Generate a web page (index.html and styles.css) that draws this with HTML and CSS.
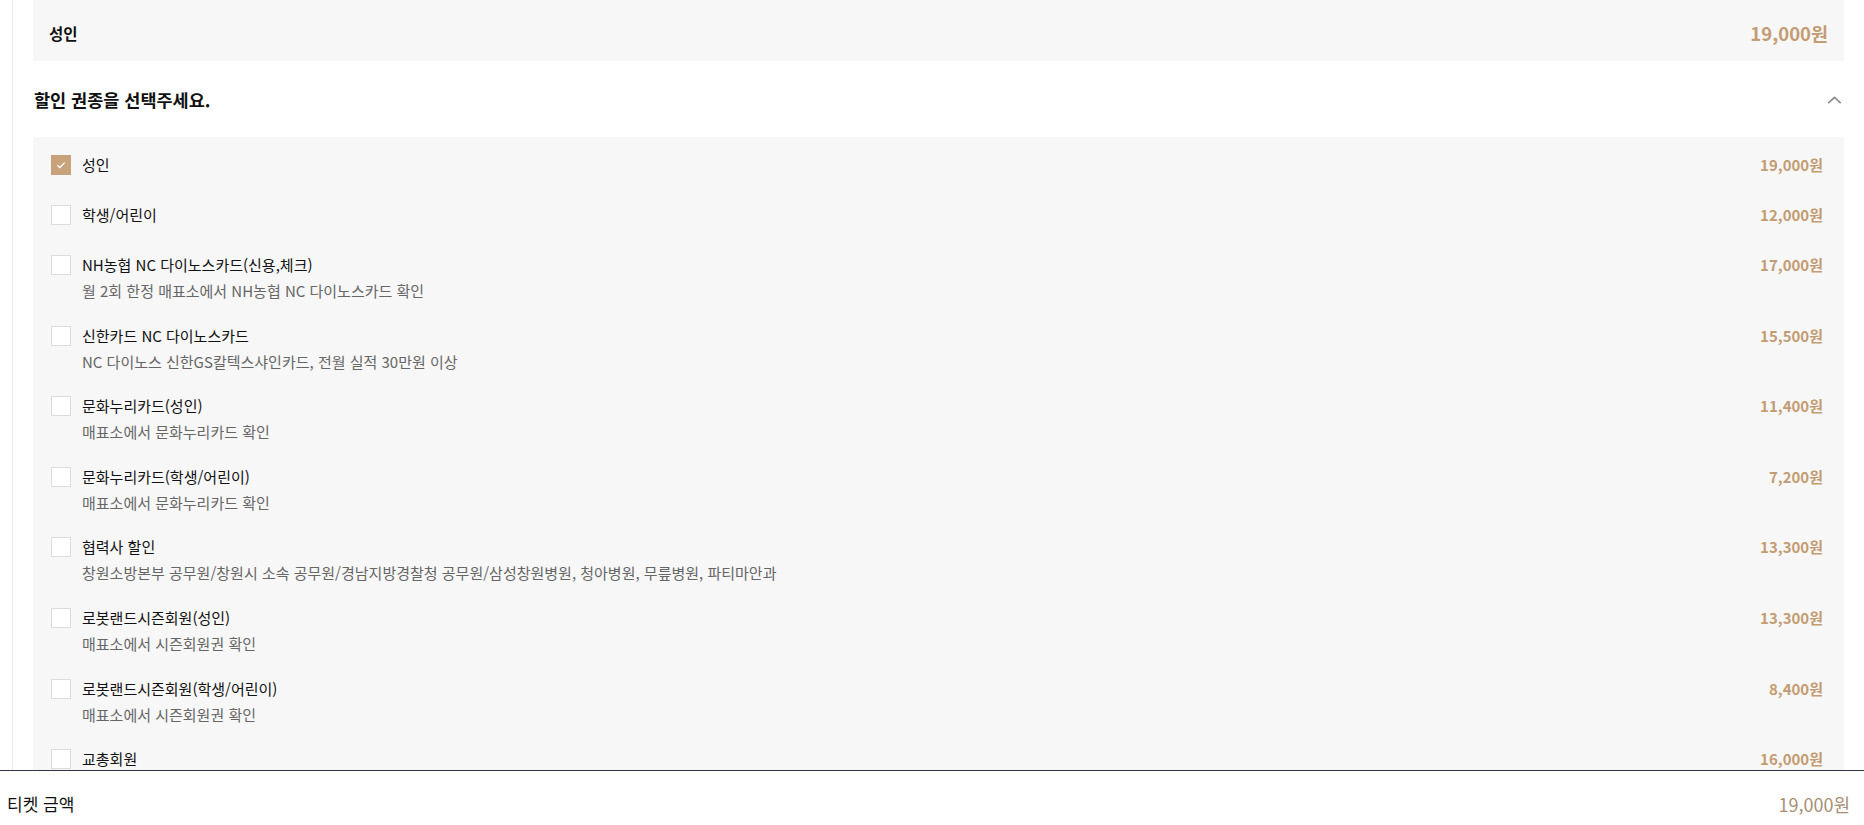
FILE: index.html
```html
<!DOCTYPE html>
<html lang="ko">
<head>
    <meta charset="UTF-8">
    <meta name="viewport" content="width=device-width, initial-scale=1.0">
    <title>티켓 선택</title>
    <link rel="stylesheet" href="styles.css">
</head>
<body>

    <div class="ticket-page">
        <div class="sheet">
            <div class="selected-box">
                <span class="selected-name">성인</span>
                <span class="selected-price">19,000원</span>
            </div>

            <div class="discount-head">
                <h2>할인 권종을 선택주세요.</h2>
                <svg class="chevron" viewBox="0 0 16 9"><path d="M1 8L8 1.5L15 8"></path></svg>
            </div>

            <ul class="ticket-list">
                <li class="ticket-item">
                    <span class="check checked"><svg viewBox="0 0 20 20"><path d="M6 10.2l2.8 2.6L14 7.4"></path></svg></span>
                    <div class="ticket-info">
                        <p class="ticket-name">성인</p>
                    </div>
                    <span class="ticket-price">19,000원</span>
                </li>
                <li class="ticket-item">
                    <span class="check"></span>
                    <div class="ticket-info">
                        <p class="ticket-name">학생/어린이</p>
                    </div>
                    <span class="ticket-price">12,000원</span>
                </li>
                <li class="ticket-item">
                    <span class="check"></span>
                    <div class="ticket-info">
                        <p class="ticket-name">NH농협 NC 다이노스카드(신용,체크)</p>
                        <p class="ticket-desc">월 2회 한정 매표소에서 NH농협 NC 다이노스카드 확인</p>
                    </div>
                    <span class="ticket-price">17,000원</span>
                </li>
                <li class="ticket-item">
                    <span class="check"></span>
                    <div class="ticket-info">
                        <p class="ticket-name">신한카드 NC 다이노스카드</p>
                        <p class="ticket-desc">NC 다이노스 신한GS칼텍스샤인카드, 전월 실적 30만원 이상</p>
                    </div>
                    <span class="ticket-price">15,500원</span>
                </li>
                <li class="ticket-item">
                    <span class="check"></span>
                    <div class="ticket-info">
                        <p class="ticket-name">문화누리카드(성인)</p>
                        <p class="ticket-desc">매표소에서 문화누리카드 확인</p>
                    </div>
                    <span class="ticket-price">11,400원</span>
                </li>
                <li class="ticket-item">
                    <span class="check"></span>
                    <div class="ticket-info">
                        <p class="ticket-name">문화누리카드(학생/어린이)</p>
                        <p class="ticket-desc">매표소에서 문화누리카드 확인</p>
                    </div>
                    <span class="ticket-price">7,200원</span>
                </li>
                <li class="ticket-item">
                    <span class="check"></span>
                    <div class="ticket-info">
                        <p class="ticket-name">협력사 할인</p>
                        <p class="ticket-desc">창원소방본부 공무원/창원시 소속 공무원/경남지방경찰청 공무원/삼성창원병원, 청아병원, 무릎병원, 파티마안과</p>
                    </div>
                    <span class="ticket-price">13,300원</span>
                </li>
                <li class="ticket-item">
                    <span class="check"></span>
                    <div class="ticket-info">
                        <p class="ticket-name">로봇랜드시즌회원(성인)</p>
                        <p class="ticket-desc">매표소에서 시즌회원권 확인</p>
                    </div>
                    <span class="ticket-price">13,300원</span>
                </li>
                <li class="ticket-item">
                    <span class="check"></span>
                    <div class="ticket-info">
                        <p class="ticket-name">로봇랜드시즌회원(학생/어린이)</p>
                        <p class="ticket-desc">매표소에서 시즌회원권 확인</p>
                    </div>
                    <span class="ticket-price">8,400원</span>
                </li>
                <li class="ticket-item">
                    <span class="check"></span>
                    <div class="ticket-info">
                        <p class="ticket-name">교총회원</p>
                    </div>
                    <span class="ticket-price">16,000원</span>
                </li>
            </ul>
        </div>

        <div class="total-bar">
            <span class="total-label">티켓 금액</span>
            <span class="total-price">19,000원</span>
        </div>
    </div>

</body>
</html>
```

FILE: styles.css
```css
:root {
    --bg-gray: #f7f7f7;
    --line: #ececec;
    --text-main: #111;
    --text-sub: #666;
    --gold: #c39c73;
    --gold-dark: #a88f74;
}

* { box-sizing: border-box; }

body {
    margin: 0;
    font-family: "Noto Sans CJK KR", "Noto Sans", sans-serif;
    color: var(--text-main);
    background: #fff;
}

p { margin: 0; }

.ticket-page {
    display: flex;
    flex-direction: column;
    height: 100vh;
}

.sheet {
    flex: 1;
    overflow: hidden;
    margin-left: 12px;
    padding: 0 20px;
    border-left: 1px solid var(--line);
}

.selected-box {
    display: flex;
    justify-content: space-between;
    align-items: center;
    height: 61px;
    padding: 5px 16px 0 16px;
    background-color: var(--bg-gray);
}
.selected-name { font-size: 15.5px; font-weight: 700; }
.selected-price { font-size: 18.5px; font-weight: 700; color: var(--gold); }

.discount-head {
    display: flex;
    justify-content: space-between;
    align-items: center;
    height: 76px;
    padding: 0 2px 0 1px;
}
.discount-head h2 { margin: 0; font-size: 17.5px; font-weight: 700; }
.chevron { width: 15px; height: 8px; margin-top: 2px; fill: none; stroke: #8a8a8a; stroke-width: 1.8; }

.ticket-list {
    list-style: none;
    margin: 0;
    padding: 17px 21px 0 18px;
    background-color: var(--bg-gray);
}

.ticket-item {
    display: flex;
    align-items: flex-start;
    min-height: 50px;
    padding-bottom: 23.6px;
}

.check {
    flex: none;
    width: 20px;
    height: 20px;
    margin-top: 1px;
    margin-right: 11px;
    background: #fff;
    border: 1px solid #dcdcdc;
}
.check.checked { background-color: #c7a27b; border-color: #c7a27b; }
.check svg { display: block; width: 18px; height: 18px; fill: none; stroke: #fff; stroke-width: 1.4; }

.ticket-info { flex: 1; }
.ticket-name { font-size: 15px; line-height: 21px; }
.ticket-desc { margin-top: 6px; font-size: 15px; line-height: 20px; color: var(--text-sub); }

.ticket-price { font-size: 15px; line-height: 21px; font-weight: 700; color: var(--gold); }

.total-bar {
    flex: none;
    display: flex;
    justify-content: space-between;
    height: 55px;
    padding: 21px 14px 0 7px;
    border-top: 1px solid #2f3543;
}
.total-label { font-size: 17px; line-height: 24px; }
.total-price { font-size: 18px; line-height: 24px; color: var(--gold-dark); }
```
